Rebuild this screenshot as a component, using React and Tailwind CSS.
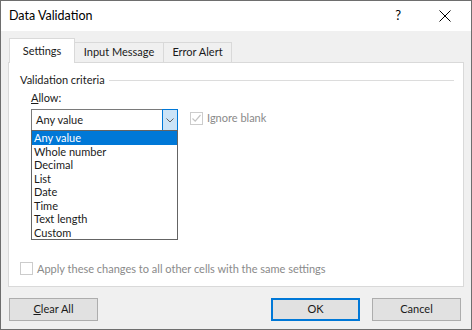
import { useState } from "react";

const options = [
  "Any value",
  "Whole number",
  "Decimal",
  "List",
  "Date",
  "Time",
  "Text length",
  "Custom",
];

const Checkbox = ({ checked }) => (
  <span className="w-[13px] h-[13px] border border-[#cccccc] bg-white flex items-center justify-center shrink-0">
    {checked && (
      <svg width="11" height="11" viewBox="0 0 11 11">
        <path d="M1.5 5.5 L4.2 8.2 L9.5 2" fill="none" stroke="#c4c4c4" strokeWidth="1.2" />
      </svg>
    )}
  </span>
);

const Tab = ({ label, active, width }) =>
  active ? (
    <div className={`h-[25px] ${width} bg-white border-t border-l border-r border-[#d9d9d9] flex items-center justify-center -mb-px relative z-10`}>
      {label}
    </div>
  ) : (
    <div className={`h-[20px] ${width} border-t border-r border-[#d9d9d9] flex items-center justify-center`}>
      {label}
    </div>
  );

const Button = ({ children, primary, className = "" }) => (
  <button
    className={`h-[23px] w-[89px] bg-[#e1e1e1] text-[11px] text-[#1a1a1a] ${
      primary ? "border-2 border-[#0078d7]" : "border border-[#adadad]"
    } ${className}`}
  >
    {children}
  </button>
);

export default function App() {
  const [selected] = useState(0);

  return (
    <div
      className="w-[472px] h-[330px] bg-[#f0f0f0] border border-[#6e6e6e] flex flex-col text-[11px] text-[#1a1a1a]"
      style={{ fontFamily: 'Lato, "Noto Sans", sans-serif' }}
    >
      {/* title bar */}
      <div className="h-[30px] bg-white flex items-center pl-[8px] shrink-0">
        <span className="text-[12.5px] text-black">Data Validation</span>
        <span className="ml-auto text-[13px] text-black mr-[38px]">?</span>
        <svg width="12" height="12" viewBox="0 0 12 12" className="mr-[20px]">
          <path d="M0.5 0.5 L11.5 11.5 M11.5 0.5 L0.5 11.5" stroke="#000" strokeWidth="1" />
        </svg>
      </div>

      <div className="px-[7px] flex flex-col">
        {/* tabs */}
        <div className="flex items-end h-[31px] pl-[1px]">
          <Tab label="Settings" active width="w-[66px]" />
          <Tab label="Input Message" width="w-[89px]" />
          <Tab label="Error Alert" width="w-[68px]" />
        </div>

        {/* panel */}
        <div className="h-[225px] bg-white border border-[#d9d9d9] pl-[11px] pt-[9px] flex flex-col">
          <div className="flex items-center h-[16px]">
            <span>Validation criteria</span>
            <div className="flex-1 h-px bg-[#dcdcdc] ml-[4px] mr-[9px]" />
          </div>

          <div className="pl-[11px] mt-[3px] h-[15px] flex items-center">
            <span>
              <span className="underline">A</span>llow:
            </span>
          </div>

          <div className="pl-[11px] mt-[3px] flex items-start">
            <div className="relative">
              <div className="w-[147px] h-[22px] border border-[#7a7a7a] bg-white flex items-center">
                <span className="pl-[4px] flex-1">{options[selected]}</span>
                <div className="w-[16px] h-[22px] -mr-px -my-px border border-[#0078d7] bg-[#cce4f7] flex items-center justify-center">
                  <svg width="8" height="5" viewBox="0 0 8 5">
                    <path d="M0.5 0.5 L4 4 L7.5 0.5" fill="none" stroke="#606060" strokeWidth="1" />
                  </svg>
                </div>
              </div>
              <div className="absolute left-0 top-[21px] w-[147px] border border-[#646464] bg-white z-20">
                {options.map((o, i) => (
                  <div
                    key={o}
                    className={`h-[13.5px] leading-[13.5px] pl-[2px] ${
                      i === selected ? "bg-[#0078d7] text-white" : ""
                    }`}
                  >
                    {o}
                  </div>
                ))}
              </div>
            </div>
            <div className="ml-[12px] mt-[1px] flex items-center gap-[4px] text-[#8a8a8a]">
              <Checkbox checked />
              <span>Ignore blank</span>
            </div>
          </div>

          <div className="mt-auto mb-[9px] flex items-center gap-[4px] text-[#8a8a8a]">
            <Checkbox />
            <span>Apply these changes to all other cells with the same settings</span>
          </div>
        </div>

        {/* buttons */}
        <div className="flex mt-[11px]">
          <Button className="ml-[1px]">
            <span className="underline">C</span>lear All
          </Button>
          <Button primary className="ml-auto">
            OK
          </Button>
          <Button className="ml-[12px] mr-[3px]">Cancel</Button>
        </div>
      </div>
    </div>
  );
}
